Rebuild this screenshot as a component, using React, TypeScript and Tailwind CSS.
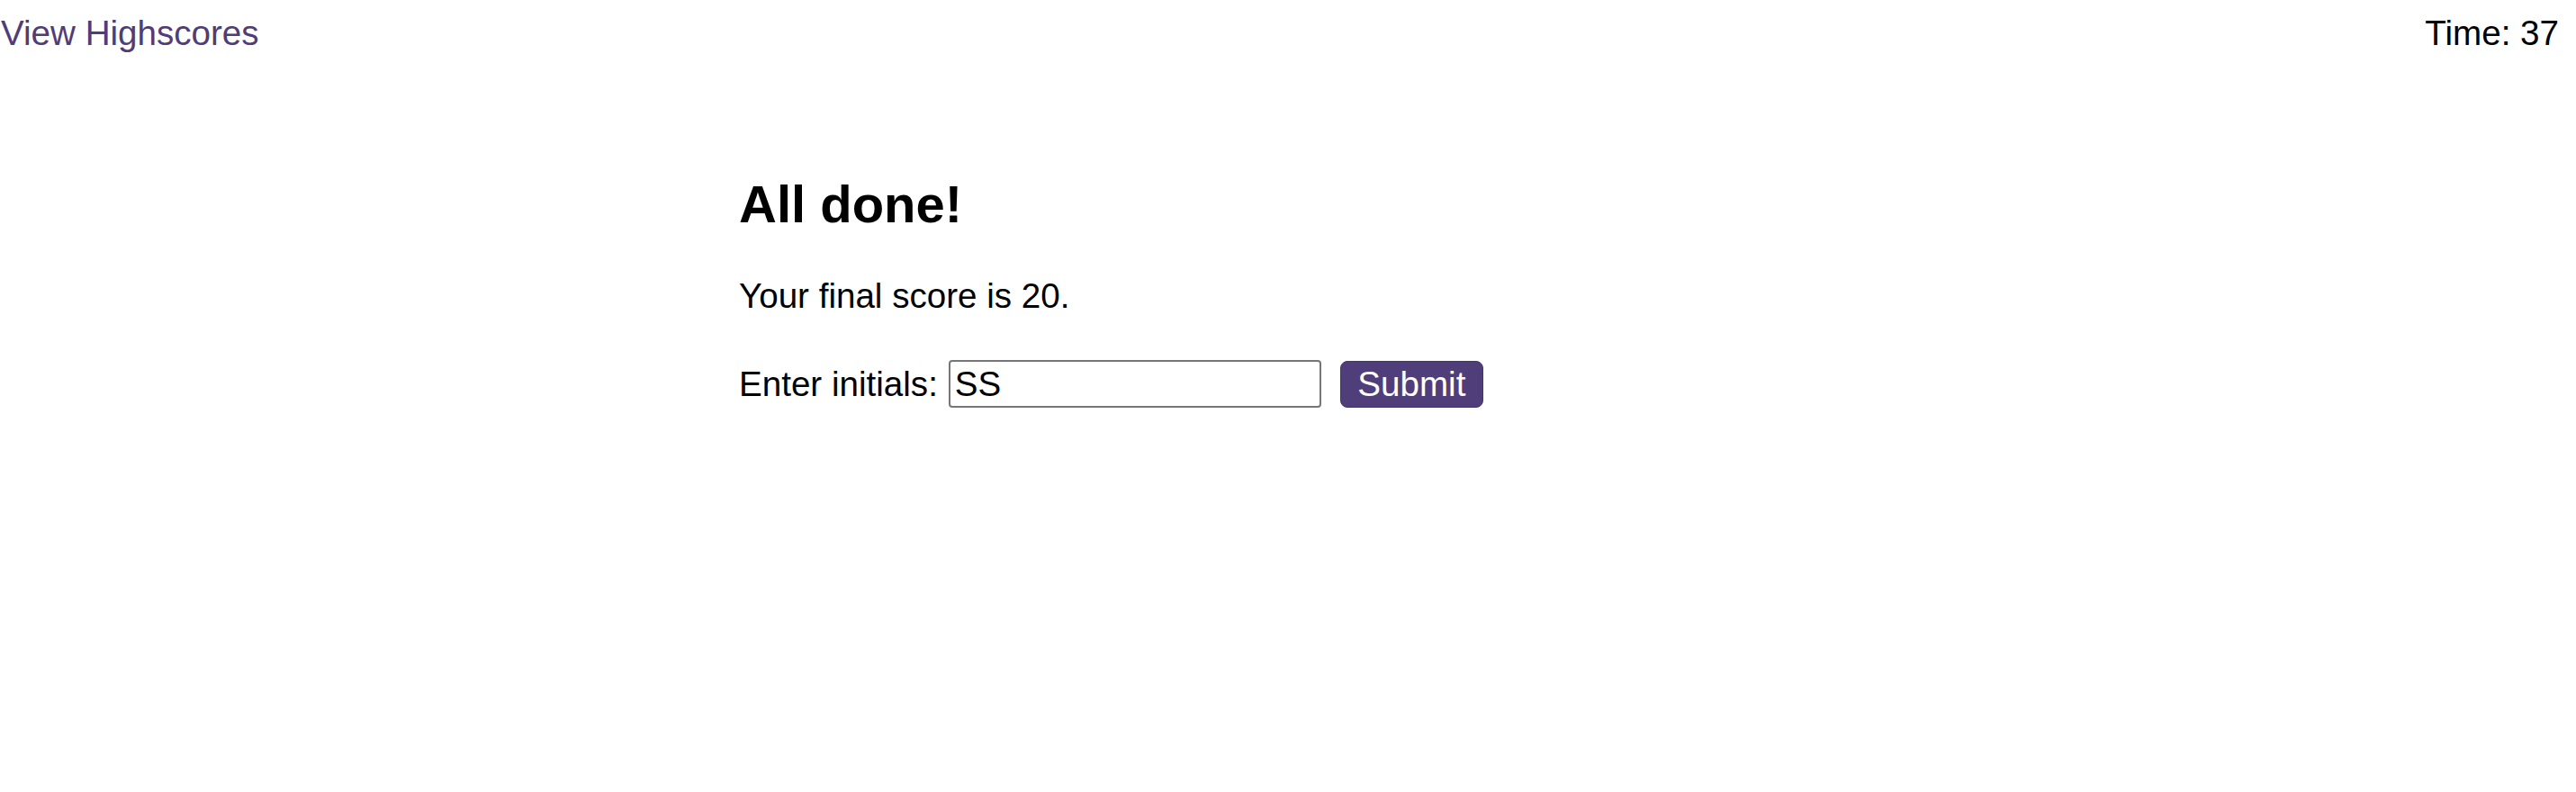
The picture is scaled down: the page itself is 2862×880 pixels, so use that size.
import React, { useState } from 'react';

export default function App() {
  const [initials, setInitials] = useState('SS');

  return (
    <div className="min-h-screen bg-white text-black font-['Liberation_Sans',Arial,sans-serif]">
      <header className="flex justify-between items-start pl-[1px] pr-[19px] pt-[15px] text-[38.6px] leading-[44px]">
        <a href="#" className="text-[#4f3c79]">
          View Highscores
        </a>
        <span>Time: 37</span>
      </header>

      <main className="w-[1220px] mx-auto mt-[135px]">
        <h2 className="text-[58px] font-bold leading-[66px]">All done!</h2>
        <p className="mt-[47px] text-[38.6px] leading-[44px]">Your final score is 20.</p>
        <form
          className="mt-[49px] flex items-center text-[38.6px] leading-[44px]"
          onSubmit={(e) => e.preventDefault()}
        >
          <label htmlFor="initials">Enter initials:</label>
          <input
            id="initials"
            value={initials}
            onChange={(e) => setInitials(e.target.value)}
            className="ml-[12px] w-[414px] h-[53px] border-2 border-[#767676] rounded-[4px] px-[5px] pt-[1px] text-[38.6px] leading-[44px] text-black outline-none"
          />
          <button
            type="submit"
            className="ml-[21px] h-[52px] w-[159px] rounded-[8px] bg-[#503e7a] border border-[#45346b] text-white text-[38.6px] leading-[44px] flex items-center justify-center"
          >
            Submit
          </button>
        </form>
      </main>
    </div>
  );
}
